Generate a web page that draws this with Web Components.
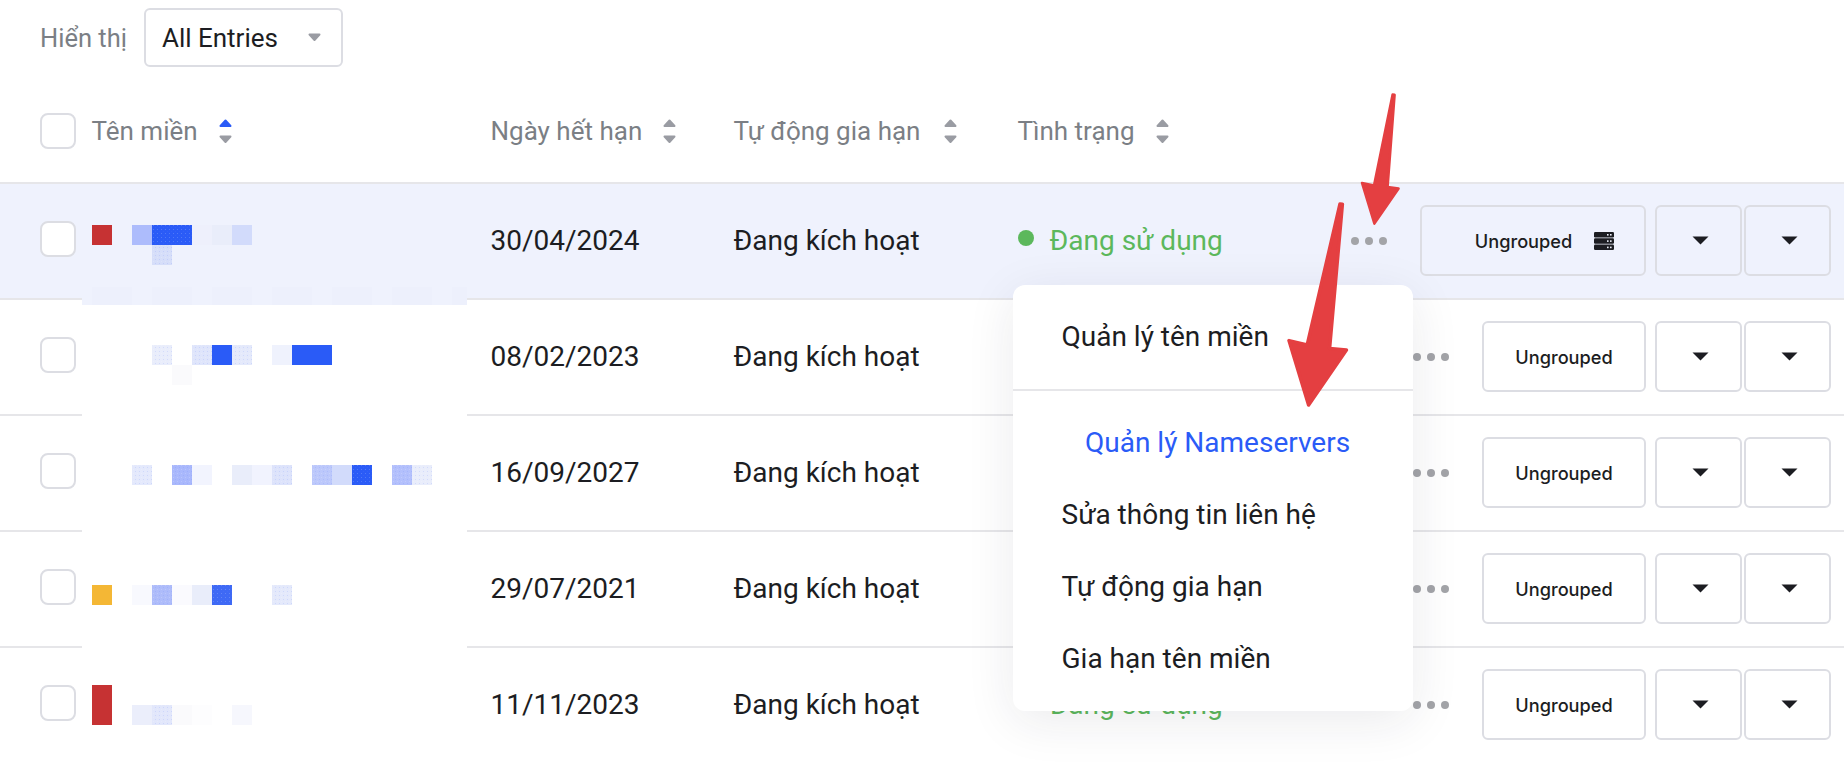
<!DOCTYPE html>
<html lang="vi">
<head>
<meta charset="utf-8">
<title>Tên miền</title>
<style>
  html, body { margin: 0; background: #fff; }
  body { width: 1844px; height: 762px; overflow: hidden; font-family: Roboto, "Liberation Sans", sans-serif; color: #1c1d22; }
</style>
</head>
<body>
<domain-page>
  <filter-bar label="Hiển thị" value="All Entries"></filter-bar>
  <table-head>
    <sort-label active>Tên miền</sort-label>
    <sort-label>Ngày hết hạn</sort-label>
    <sort-label style="--sort-gap: 24px">Tự động gia hạn</sort-label>
    <sort-label>Tình trạng</sort-label>
  </table-head>
  <domain-row highlight date="30/04/2024"></domain-row>
  <domain-row date="08/02/2023"></domain-row>
  <domain-row date="16/09/2027"></domain-row>
  <domain-row date="29/07/2021"></domain-row>
  <domain-row date="11/11/2023"></domain-row>
  <row-menu>
    <menu-item slot="head">Quản lý tên miền</menu-item>
    <menu-item active>Quản lý Nameservers</menu-item>
    <menu-item>Sửa thông tin liên hệ</menu-item>
    <menu-item>Tự động gia hạn</menu-item>
    <menu-item>Gia hạn tên miền</menu-item>
  </row-menu>
  <pixel-mask></pixel-mask>
  <red-arrows></red-arrows>
</domain-page>

<script>
const CARET_UP = 'M6.5 1.5 L11.5 7 L1.5 7 Z';
const CARET_DOWN = 'M1.5 1.5 L11.5 1.5 L6.5 7 Z';

const caret = (d, color) => `<path d="${d}" fill="${color}" stroke="${color}" stroke-width="2" stroke-linejoin="round"/>`;

class DomainPage extends HTMLElement {
    constructor() {
        super();
        this.attachShadow({ mode: 'open' });
    }

    connectedCallback() {
        this.shadowRoot.innerHTML = `
            <style>
                :host { display: block; position: relative; width: 1844px; height: 762px; overflow: hidden; }
            </style>
            <slot></slot>
        `;
    }
}

class FilterBar extends HTMLElement {
    constructor() {
        super();
        this.attachShadow({ mode: 'open' });
    }

    connectedCallback() {
        this.shadowRoot.innerHTML = `
            <style>
                :host { display: flex; align-items: center; gap: 17px; padding: 8px 0 0 40px; font-size: 26px; }
                .label { color: #7b7f85; font-size: 25.5px; }
                .select {
                    box-sizing: border-box;
                    width: 199px;
                    height: 59px;
                    display: flex;
                    align-items: center;
                    justify-content: space-between;
                    padding: 0 20px 0 16px;
                    border: 2px solid #dcdde3;
                    border-radius: 6px;
                }
                svg { display: block; }
            </style>
            <span class="label">${this.getAttribute('label')}</span>
            <div class="select">
                <span>${this.getAttribute('value')}</span>
                <svg width="13" height="9">${caret(CARET_DOWN, '#9a9ca3')}</svg>
            </div>
        `;
    }
}

class TableHead extends HTMLElement {
    constructor() {
        super();
        this.attachShadow({ mode: 'open' });
    }

    connectedCallback() {
        this.shadowRoot.innerHTML = `
            <style>
                :host {
                    display: grid;
                    grid-template-columns: 52px 399px 243px 284px 1fr;
                    align-items: center;
                    box-sizing: border-box;
                    height: 117px;
                    padding: 13px 0 0 39.5px;
                    border-bottom: 2px solid #e6e6e9;
                }
            </style>
            <tick-box></tick-box>
            <slot></slot>
        `;
    }
}

class SortLabel extends HTMLElement {
    constructor() {
        super();
        this.attachShadow({ mode: 'open' });
    }

    connectedCallback() {
        const up = this.hasAttribute('active') ? '#2a5bf7' : '#9a9ca3';
        this.shadowRoot.innerHTML = `
            <style>
                :host { display: flex; align-items: center; gap: var(--sort-gap, 21px); font-size: 26px; color: #7b7f85; white-space: nowrap; }
                svg { display: block; }
            </style>
            <slot></slot>
            <svg width="13" height="25">
                <g>${caret(CARET_UP, up)}</g>
                <g transform="translate(0 16)">${caret(CARET_DOWN, '#9a9ca3')}</g>
            </svg>
        `;
    }
}

class TickBox extends HTMLElement {
    constructor() {
        super();
        this.attachShadow({ mode: 'open' });
    }

    connectedCallback() {
        this.shadowRoot.innerHTML = `
            <style>
                :host {
                    display: block;
                    box-sizing: border-box;
                    width: 36px;
                    height: 36px;
                    background: #fff;
                    border: 2px solid #dcdde3;
                    border-radius: 8px;
                }
            </style>
        `;
    }
}

class StatusBadge extends HTMLElement {
    constructor() {
        super();
        this.attachShadow({ mode: 'open' });
    }

    connectedCallback() {
        this.shadowRoot.innerHTML = `
            <style>
                :host { display: flex; align-items: center; gap: 16px; font-size: 28px; color: #5cb85c; white-space: nowrap; }
                i { width: 16px; height: 16px; border-radius: 50%; background: #5cb85c; margin-top: -4px; }
            </style>
            <i></i><slot></slot>
        `;
    }
}

class GroupActions extends HTMLElement {
    constructor() {
        super();
        this.attachShadow({ mode: 'open' });
    }

    connectedCallback() {
        const server = this.hasAttribute('server');
        const bg = server ? '#eff2fd' : '#fff';
        const bar = (y) => `
            <rect y="${y}" width="20" height="5.4" rx="1.2" fill="#1c1d22"/>
            <rect x="13" y="${y + 2}" width="1.6" height="1.6" fill="${bg}"/>
            <rect x="16" y="${y + 2}" width="1.6" height="1.6" fill="${bg}"/>`;
        const arrow = `<svg width="17" height="9" viewBox="0 0 17 9"><path d="M0.5 0.5 H16.5 L8.5 8.5 Z" fill="#1c1d22"/></svg>`;
        this.shadowRoot.innerHTML = `
            <style>
                :host { display: flex; align-items: center; margin-top: 1px; font-family: Inter, "Noto Sans", sans-serif; font-size: 18.2px; font-weight: 500; }
                .dots { display: flex; gap: 6px; margin-right: 33px; }
                .dots i { width: 8px; height: 8px; border-radius: 50%; background: #a3a4a8; }
                .btn {
                    box-sizing: border-box;
                    height: 71px;
                    display: flex;
                    align-items: center;
                    justify-content: center;
                    border: 2px solid #dcdde3;
                    border-radius: 6px;
                }
                .group { width: 164px; gap: 22px; margin-right: 9px; }
                .group.wide { width: 226px; padding-left: 23px; }
                .arrow { width: 87px; padding: 0 0 0 3px; }
                .arrow + .arrow { margin-left: 2px; }
                svg { display: block; }
            </style>
            <div class="dots"><i></i><i></i><i></i></div>
            <div class="btn group ${server ? 'wide' : ''}">
                <span>Ungrouped</span>
                ${server ? `<svg width="20" height="18">${bar(0)}${bar(6.3)}${bar(12.6)}</svg>` : ''}
            </div>
            <div class="btn arrow">${arrow}</div>
            <div class="btn arrow">${arrow}</div>
        `;
    }
}

class DomainRow extends HTMLElement {
    constructor() {
        super();
        this.attachShadow({ mode: 'open' });
    }

    connectedCallback() {
        const highlight = this.hasAttribute('highlight');
        this.shadowRoot.innerHTML = `
            <style>
                :host {
                    display: grid;
                    grid-template-columns: 52px 399px 243px 284px 1fr auto;
                    align-items: center;
                    box-sizing: border-box;
                    height: 116px;
                    padding: 0 13px 2px 39.5px;
                    font-size: 28px;
                    background: ${highlight ? '#eff2fd' : '#fff'};
                    border-bottom: 2px solid #e6e6e9;
                }
                tick-box { margin-top: -2px; }
            </style>
            <tick-box></tick-box>
            <span></span>
            <span>${this.getAttribute('date')}</span>
            <span>Đang kích hoạt</span>
            <status-badge>Đang sử dụng</status-badge>
            <group-actions ${highlight ? 'server' : ''}></group-actions>
        `;
    }
}

class RowMenu extends HTMLElement {
    constructor() {
        super();
        this.attachShadow({ mode: 'open' });
    }

    connectedCallback() {
        this.shadowRoot.innerHTML = `
            <style>
                :host {
                    position: absolute;
                    left: 1013px;
                    top: 285px;
                    width: 400px;
                    height: 426px;
                    box-sizing: border-box;
                    background: #fff;
                    border-radius: 12px;
                    box-shadow: 0 10px 50px rgba(30, 30, 60, .09);
                    font-size: 28px;
                }
                .head {
                    box-sizing: border-box;
                    height: 106px;
                    display: flex;
                    align-items: center;
                    padding-bottom: 2px;
                    border-bottom: 2px solid #e6e6e9;
                }
                .list { padding-top: 15px; }
            </style>
            <div class="head"><slot name="head"></slot></div>
            <div class="list"><slot></slot></div>
        `;
    }
}

class MenuItem extends HTMLElement {
    constructor() {
        super();
        this.attachShadow({ mode: 'open' });
    }

    connectedCallback() {
        const active = this.hasAttribute('active');
        this.shadowRoot.innerHTML = `
            <style>
                :host {
                    display: flex;
                    align-items: center;
                    height: 72px;
                    padding-left: ${active ? 72 : 48.5}px;
                    color: ${active ? '#2a5bf7' : '#1c1d22'};
                }
            </style>
            <slot></slot>
        `;
    }
}

// the blurred domain names: [x, y, width, height, colour, dithered]
const BLUE = '#2a5bf7';
const MASK_BLOCKS = [
    [92, 225, 20, 20, '#c63233'],
    [132, 225, 20, 20, '#adbcfc'], [152, 225, 40, 20, BLUE, 1], [192, 225, 20, 20, '#eef0fc'], [212, 225, 20, 20, '#e9edfa'], [232, 225, 20, 20, '#d2dbfb'],
    [152, 245, 20, 20, '#d6def9', 1],
    [152, 345, 20, 20, '#e9edfb', 1], [192, 345, 20, 20, '#dfe5fb', 1], [212, 345, 20, 20, BLUE], [232, 345, 20, 20, '#e4e9fb', 1], [272, 345, 20, 20, '#eff2fd'], [292, 345, 40, 20, BLUE],
    [172, 365, 20, 20, '#fafafc'],
    [132, 465, 20, 20, '#e4e9fc', 1], [172, 465, 20, 20, '#a9b8fc', 1], [192, 465, 20, 20, '#f2f4fe'],
    [232, 465, 20, 20, '#e9edfa'], [252, 465, 20, 20, '#f1f3fe'], [272, 465, 20, 20, '#dde3fb', 1],
    [312, 465, 20, 20, '#bcc8fb', 1], [332, 465, 20, 20, '#d2dbfb'], [352, 465, 20, 20, BLUE, 1], [392, 465, 20, 20, '#b3c0fc', 1], [412, 465, 20, 20, '#e9edfb', 1],
    [92, 585, 20, 20, '#f4b735'],
    [132, 585, 20, 20, '#f8f9fe'], [152, 585, 20, 20, '#aebcfa', 1], [172, 585, 20, 20, '#fafafe'], [192, 585, 20, 20, '#e9edfa'], [212, 585, 20, 20, '#3e69f5', 1], [272, 585, 20, 20, '#e4e9fb', 1],
    [92, 685, 20, 40, '#c63233'],
    [132, 705, 20, 20, '#ebeefb'], [152, 705, 20, 20, '#e2e7fb', 1], [172, 705, 20, 20, '#fafafc'], [192, 705, 20, 20, '#fdfdfe'], [232, 705, 20, 20, '#f6f7fd'],
];
const MASK_BAND = [92, 152, 212, 272, 332, 392];

class PixelMask extends HTMLElement {
    constructor() {
        super();
        this.attachShadow({ mode: 'open' });
    }

    connectedCallback() {
        const blocks = MASK_BLOCKS.map(([x, y, w, h, fill, dither]) => `
            <rect x="${x}" y="${y}" width="${w}" height="${h}" fill="${fill}"/>
            ${dither ? `<rect x="${x}" y="${y}" width="${w}" height="${h}" fill="url(#dither)"/>` : ''}`).join('');
        const band = MASK_BAND.map((x) => `<rect x="${x}" y="287" width="40" height="18" fill="#edf0fc"/>`).join('');
        this.shadowRoot.innerHTML = `
            <style>
                :host { position: absolute; left: 0; top: 0; pointer-events: none; }
                svg { display: block; }
            </style>
            <svg width="500" height="762" shape-rendering="crispEdges">
                <defs>
                    <pattern id="dither" width="4" height="4" patternUnits="userSpaceOnUse">
                        <rect x="1" y="1" width="1" height="1" fill="#fff" opacity=".18"/>
                        <rect x="3" y="3" width="1" height="1" fill="#5f80f8" opacity=".16"/>
                    </pattern>
                </defs>
                <rect x="82" y="296" width="385" height="9" fill="#eff2fd"/>
                ${band}
                <rect x="452" y="287" width="15" height="18" fill="#edf0fc"/>
                <rect x="82" y="412" width="385" height="6" fill="#fff"/>
                <rect x="82" y="528" width="385" height="6" fill="#fff"/>
                <rect x="82" y="644" width="385" height="6" fill="#fff"/>
                ${blocks}
            </svg>
        `;
    }
}

class RedArrows extends HTMLElement {
    constructor() {
        super();
        this.attachShadow({ mode: 'open' });
    }

    connectedCallback() {
        this.shadowRoot.innerHTML = `
            <style>
                :host { position: absolute; left: 0; top: 0; pointer-events: none; }
                svg { display: block; }
            </style>
            <svg width="1844" height="762" fill="#e43f41" stroke="#e43f41" stroke-linejoin="round">
                <path stroke-width="2.5" d="M1392.6 94.6 L1394.6 94.8 L1387.6 187 L1398.6 188.6 L1374.4 223.6 L1362 183 L1374 185.5 Z"/>
                <path stroke-width="3.5" d="M1340 204 L1342.4 204.2 L1329.6 348.4 L1346.4 350 L1308.6 405 L1289 340.6 L1307.2 345 Z"/>
            </svg>
        `;
    }
}

customElements.define('domain-page', DomainPage);
customElements.define('filter-bar', FilterBar);
customElements.define('table-head', TableHead);
customElements.define('sort-label', SortLabel);
customElements.define('tick-box', TickBox);
customElements.define('status-badge', StatusBadge);
customElements.define('group-actions', GroupActions);
customElements.define('domain-row', DomainRow);
customElements.define('row-menu', RowMenu);
customElements.define('menu-item', MenuItem);
customElements.define('pixel-mask', PixelMask);
customElements.define('red-arrows', RedArrows);
</script>
</body>
</html>
